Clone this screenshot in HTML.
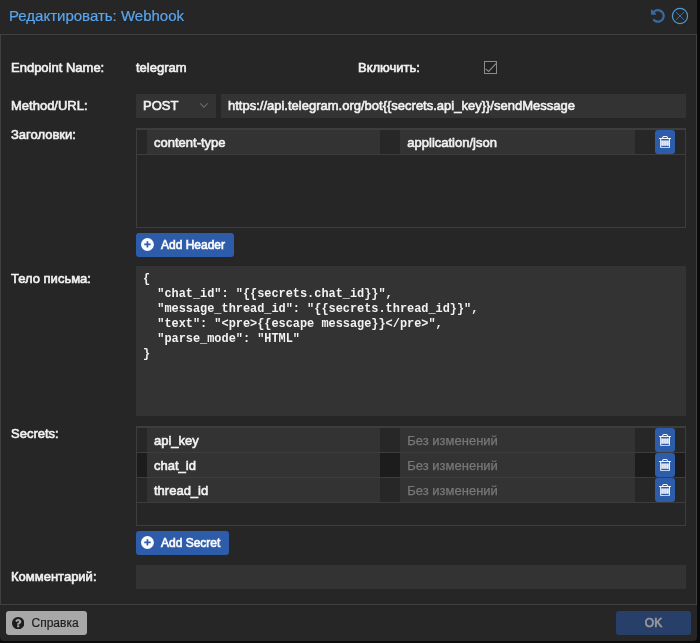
<!DOCTYPE html>
<html lang="ru">
<head>
<meta charset="utf-8">
<title>Редактировать: Webhook</title>
<style>
*{box-sizing:border-box;margin:0;padding:0}
html,body{width:700px;height:643px;overflow:hidden;background:#0a0a0a}
body{font-family:"Liberation Sans",Arial,Helvetica,sans-serif;font-size:13px;color:#f2f2f2;position:relative;-webkit-text-stroke:0.6px currentColor}
.win{will-change:transform;position:absolute;left:0;top:0;width:697px;height:641.400px;background:#262626;border-radius:0 0 4px 4px}
.title{position:absolute;left:9px;top:6px;font-size:15px;line-height:20px;color:#5aa5ee;white-space:nowrap;-webkit-text-stroke:0.2px currentColor}
.body{position:absolute;left:0;top:34px;width:697px;height:571px;border:1px solid #404040;background:#262626}
.lbl{position:absolute;left:11px;white-space:nowrap;line-height:16px}
.txt{position:absolute;white-space:nowrap;line-height:16px}
.fld{position:absolute;background:#333;height:24px;line-height:24px;white-space:nowrap;overflow:hidden}
.grid{position:absolute;left:136px;width:550px;height:100px;border:1px solid #3d3d3d;background:#262626}
.row{position:relative;height:25px;border-bottom:1px solid #3d3d3d;background:#272727}
.row:first-child{height:26px;border-top:1px solid #3d3d3d}
.row.alt{background:#1c1c1c}
.row .c{position:absolute;top:0;height:24px;background:#333;line-height:25px;padding-left:7px;white-space:nowrap}
.row .c1{left:10px;width:233.400px}
.row .c2{left:263.300px;width:234.700px}
.ph{color:#787878;-webkit-text-stroke:0.25px currentColor}
.tb{position:absolute;left:518px;top:0;width:20px;height:24px;background:#2d5cab;border-radius:3px}
.tb svg{position:absolute;left:3.900px;top:6px}
.btn{position:absolute;height:24px;background:#2d5cab;border-radius:3px;color:#fafafa;-webkit-text-stroke:0.65px currentColor;font-size:12px;line-height:24px;white-space:nowrap}
.btn svg{position:absolute}
.ta{position:absolute;left:136px;top:266px;width:550px;height:150px;background:#333;font-family:"Liberation Mono","DejaVu Sans Mono",monospace;font-weight:bold;font-size:11.9px;line-height:15px;white-space:pre;padding:6px 0 0 7px;-webkit-text-stroke:0}
</style>
</head>
<body>
<div class="win">
  <div class="title">Редактировать: Webhook</div>
  <svg style="position:absolute;left:651.2px;top:9.300px" width="13.800" height="13.800" viewBox="0 0 1536 1536"><path fill="#3a699f" d="M1536 768q0 156-61 298t-164 245-245 164-298 61q-172 0-327-72.500t-264-204.500q-7-10-6.500-22.500t8.500-20.500l137-138q10-9 25-9 16 2 23 12 73 95 179 147t225 52q104 0 198.500-40.500t163.500-109.500 109.500-163.500 40.500-198.500-40.500-198.500-109.500-163.500-163.500-109.500-198.500-40.500q-98 0-188 35.500t-160 101.500l137 138q31 30 14 69-17 40-59 40h-448q-26 0-45-19t-19-45v-448q0-42 40-59 39-17 69 14l130 129q107-101 244.500-156.500t284.500-55.500q156 0 298 61t245 164 164 245 61 298z"/></svg>
  <svg style="position:absolute;left:671px;top:7px" width="18" height="18" viewBox="0 0 18 18"><circle cx="9" cy="9" r="7.600" fill="none" stroke="#4a9ad4" stroke-width="1.200"/><path d="M5.200 5.200l7.600 7.600M12.800 5.200l-7.600 7.600" stroke="#3a6eb2" stroke-width="1" fill="none"/></svg>
  <div class="body"></div>

  <div class="lbl" style="top:60px">Endpoint Name:</div>
  <div class="txt" style="left:136px;top:60px">telegram</div>
  <div class="lbl" style="left:358px;top:60px">Включить:</div>
  <svg style="position:absolute;left:484px;top:61px" width="13" height="13" viewBox="0 0 13 13"><rect x="0.500" y="0.500" width="12" height="12" fill="#212121" stroke="#8c8c8c"/><path d="M1.600 7.900l3 2.600 7.900-8.300" fill="none" stroke="#8c8c8c" stroke-width="1.100"/></svg>

  <div class="lbl" style="top:98px">Method/URL:</div>
  <div class="fld" style="left:136px;top:94px;width:80px;padding-left:7px">POST</div>
  <svg style="position:absolute;left:199px;top:101px" width="10" height="8" viewBox="0 0 10 8"><path d="M1.200 2.300l3.700 3.900 3.700-3.900" fill="none" stroke="#6a6a6a" stroke-width="1.100"/></svg>
  <div class="fld" style="left:221px;top:94px;width:465px;padding-left:7px">https://api.telegram.org/bot{{secrets.api_key}}/sendMessage</div>

  <div class="lbl" style="top:127px">Заголовки:</div>
  <div class="grid" style="top:128px">
    <div class="row"><div class="c c1">content-type</div><div class="c c2">application/json</div><div class="tb"><svg width="12.1" height="12.3" viewBox="0 0 1408 1536" preserveAspectRatio="none"><rect x="230" y="560" width="948" height="660" fill="#dfe6f3" opacity="0.8"/><path fill="#f0f3f9" d="M512 608v576q0 14-9 23t-23 9h-64q-14 0-23-9t-9-23v-576q0-14 9-23t23-9h64q14 0 23 9t9 23zM768 608v576q0 14-9 23t-23 9h-64q-14 0-23-9t-9-23v-576q0-14 9-23t23-9h64q14 0 23 9t9 23zM1024 608v576q0 14-9 23t-23 9h-64q-14 0-23-9t-9-23v-576q0-14 9-23t23-9h64q14 0 23 9t9 23zM1152 1332v-948h-896v948q0 22 7 40.500t14.500 27 10.500 8.500h832q3 0 10.500-8.500t14.500-27 7-40.500zM480 256h448l-48-117q-7-9-17-11h-317q-10 2-17 11zM1408 288v64q0 14-9 23t-23 9h-96v948q0 83-47 143.500t-113 60.500h-832q-66 0-113-58.500t-47-141.500v-952h-96q-14 0-23-9t-9-23v-64q0-14 9-23t23-9h309l70-167q15-37 54-63t79-26h320q40 0 79 26t54 63l70 167h309q14 0 23 9t9 23z"/></svg></div></div>
  </div>
  <div class="btn" style="left:136px;top:233px;width:98px;padding-left:25px"><svg style="left:5.300px;top:5.200px" width="12.900" height="12.900" viewBox="0 0 1536 1536"><circle cx="768" cy="768" r="768" fill="#fbfcfe"/><path d="M768 390v756M390 768h756" stroke="#2d5cab" stroke-width="200" fill="none"/></svg>Add Header</div>

  <div class="lbl" style="top:271px">Тело письма:</div>
  <div class="ta">{
  "chat_id": "{{secrets.chat_id}}",
  "message_thread_id": "{{secrets.thread_id}}",
  "text": "&lt;pre&gt;{{escape message}}&lt;/pre&gt;",
  "parse_mode": "HTML"
}</div>

  <div class="lbl" style="top:426px">Secrets:</div>
  <div class="grid" style="top:426px">
    <div class="row"><div class="c c1">api_key</div><div class="c c2 ph">Без изменений</div><div class="tb"><svg width="12.1" height="12.3" viewBox="0 0 1408 1536" preserveAspectRatio="none"><rect x="230" y="560" width="948" height="660" fill="#dfe6f3" opacity="0.8"/><path fill="#f0f3f9" d="M512 608v576q0 14-9 23t-23 9h-64q-14 0-23-9t-9-23v-576q0-14 9-23t23-9h64q14 0 23 9t9 23zM768 608v576q0 14-9 23t-23 9h-64q-14 0-23-9t-9-23v-576q0-14 9-23t23-9h64q14 0 23 9t9 23zM1024 608v576q0 14-9 23t-23 9h-64q-14 0-23-9t-9-23v-576q0-14 9-23t23-9h64q14 0 23 9t9 23zM1152 1332v-948h-896v948q0 22 7 40.500t14.500 27 10.500 8.500h832q3 0 10.500-8.500t14.500-27 7-40.500zM480 256h448l-48-117q-7-9-17-11h-317q-10 2-17 11zM1408 288v64q0 14-9 23t-23 9h-96v948q0 83-47 143.500t-113 60.500h-832q-66 0-113-58.500t-47-141.500v-952h-96q-14 0-23-9t-9-23v-64q0-14 9-23t23-9h309l70-167q15-37 54-63t79-26h320q40 0 79 26t54 63l70 167h309q14 0 23 9t9 23z"/></svg></div></div>
    <div class="row alt"><div class="c c1">chat_id</div><div class="c c2 ph">Без изменений</div><div class="tb"><svg width="12.1" height="12.3" viewBox="0 0 1408 1536" preserveAspectRatio="none"><rect x="230" y="560" width="948" height="660" fill="#dfe6f3" opacity="0.8"/><path fill="#f0f3f9" d="M512 608v576q0 14-9 23t-23 9h-64q-14 0-23-9t-9-23v-576q0-14 9-23t23-9h64q14 0 23 9t9 23zM768 608v576q0 14-9 23t-23 9h-64q-14 0-23-9t-9-23v-576q0-14 9-23t23-9h64q14 0 23 9t9 23zM1024 608v576q0 14-9 23t-23 9h-64q-14 0-23-9t-9-23v-576q0-14 9-23t23-9h64q14 0 23 9t9 23zM1152 1332v-948h-896v948q0 22 7 40.500t14.500 27 10.500 8.500h832q3 0 10.500-8.500t14.500-27 7-40.500zM480 256h448l-48-117q-7-9-17-11h-317q-10 2-17 11zM1408 288v64q0 14-9 23t-23 9h-96v948q0 83-47 143.500t-113 60.500h-832q-66 0-113-58.500t-47-141.500v-952h-96q-14 0-23-9t-9-23v-64q0-14 9-23t23-9h309l70-167q15-37 54-63t79-26h320q40 0 79 26t54 63l70 167h309q14 0 23 9t9 23z"/></svg></div></div>
    <div class="row"><div class="c c1">thread_id</div><div class="c c2 ph">Без изменений</div><div class="tb"><svg width="12.1" height="12.3" viewBox="0 0 1408 1536" preserveAspectRatio="none"><rect x="230" y="560" width="948" height="660" fill="#dfe6f3" opacity="0.8"/><path fill="#f0f3f9" d="M512 608v576q0 14-9 23t-23 9h-64q-14 0-23-9t-9-23v-576q0-14 9-23t23-9h64q14 0 23 9t9 23zM768 608v576q0 14-9 23t-23 9h-64q-14 0-23-9t-9-23v-576q0-14 9-23t23-9h64q14 0 23 9t9 23zM1024 608v576q0 14-9 23t-23 9h-64q-14 0-23-9t-9-23v-576q0-14 9-23t23-9h64q14 0 23 9t9 23zM1152 1332v-948h-896v948q0 22 7 40.500t14.500 27 10.500 8.500h832q3 0 10.500-8.500t14.500-27 7-40.500zM480 256h448l-48-117q-7-9-17-11h-317q-10 2-17 11zM1408 288v64q0 14-9 23t-23 9h-96v948q0 83-47 143.500t-113 60.500h-832q-66 0-113-58.500t-47-141.500v-952h-96q-14 0-23-9t-9-23v-64q0-14 9-23t23-9h309l70-167q15-37 54-63t79-26h320q40 0 79 26t54 63l70 167h309q14 0 23 9t9 23z"/></svg></div></div>
  </div>
  <div class="btn" style="left:136px;top:531px;width:93px;padding-left:25px"><svg style="left:5.300px;top:5.200px" width="12.900" height="12.900" viewBox="0 0 1536 1536"><circle cx="768" cy="768" r="768" fill="#fbfcfe"/><path d="M768 390v756M390 768h756" stroke="#2d5cab" stroke-width="200" fill="none"/></svg>Add Secret</div>

  <div class="lbl" style="top:569px">Комментарий:</div>
  <div class="fld" style="left:136px;top:565px;width:550px"></div>

  <div class="btn" style="left:6px;top:611px;width:81px;background:#a8a8a8;color:#1e1e1e;padding-left:25.500px;-webkit-text-stroke:0.2px currentColor"><svg style="left:5.800px;top:5.700px" width="12.400" height="12.400" viewBox="0 0 1536 1536"><path fill="#1e1e1e" d="M896 1248v-192q0-14-9-23t-23-9h-192q-14 0-23 9t-9 23v192q0 14 9 23t23 9h192q14 0 23-9t9-23zM1152 576q0-88-55.500-163t-138.500-116-170-41q-243 0-371 213-15 24 8 42l132 100q7 6 19 6 16 0 25-12 53-68 86-92 34-24 86-24 48 0 85.500 26t37.500 59q0 38-20 61t-68 45q-63 28-115.500 86.500t-52.500 125.500v36q0 14 9 23t23 9h192q14 0 23-9t9-23q0-19 21.500-49.500t54.500-49.500q32-18 49-28.500t46-35 44.500-48 28-60.500 12.500-81zM1536 768q0 209-103 385.500t-279.500 279.500-385.500 103-385.500-103-279.500-279.500-103-385.500 103-385.500 279.500-279.500 385.500-103 385.500 103 279.500 279.500 103 385.500z"/></svg>Справка</div>
  <div class="btn" style="left:616px;top:611px;width:75px;background:#284069;color:#9a9a9a;text-align:center">OK</div>
</div>

</body>
</html>
